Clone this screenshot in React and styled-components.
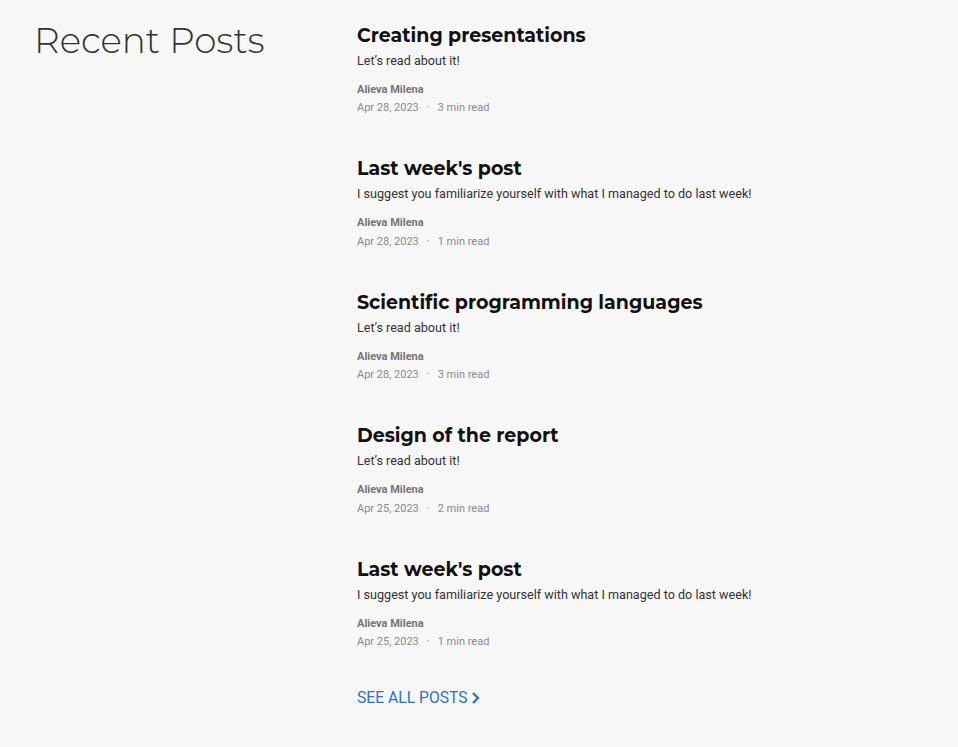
import React from "react";
import styled, { createGlobalStyle } from "styled-components";

const Global = createGlobalStyle`
  html, body { margin: 0; padding: 0; background: #f7f7f7; }
  body { font-family: Roboto, "Liberation Sans", sans-serif; }
`;

const Page = styled.div`
  display: grid;
  grid-template-columns: 322px 1fr;
  padding: 18px 0 0 35px;
  min-height: 747px;
  box-sizing: border-box;
`;

const Heading = styled.h2`
  margin: 0 0 0 -1px;
  font-family: Montserrat, "Open Sans", sans-serif;
  font-weight: 300;
  font-size: 35.7px;
  line-height: 44px;
  color: #333;
`;

const List = styled.div`
  display: flex;
  flex-direction: column;
  gap: 41px;
  padding-top: 5.75px;
`;

const Post = styled.article`
  display: flex;
  flex-direction: column;
`;

const Title = styled.h3`
  margin: 0;
  font-family: Montserrat, "Open Sans", sans-serif;
  font-weight: 700;
  font-size: 19px;
  line-height: 24px;
  color: #111;
`;

const Desc = styled.p`
  margin: 4px 0 0;
  font-size: 12.6px;
  line-height: 18px;
  color: #333;
`;

const Author = styled.div`
  margin-top: 12px;
  font-size: 11px;
  line-height: 16px;
  font-weight: 700;
  color: #757575;
`;

const Meta = styled.div`
  margin-top: 2.5px;
  font-size: 11px;
  line-height: 16px;
  color: #8a8a8a;
  display: flex;
  gap: 8px;
`;

const Footer = styled.div`
  display: flex;
  margin-top: -3px;
`;

const SeeAll = styled.a`
  display: inline-flex;
  align-items: center;
  gap: 3px;
  font-size: 15.7px;
  line-height: 20px;
  color: #2f6fcf;
  text-decoration: none;
  text-transform: uppercase;
`;

const posts = [
  { t: "Creating presentations", d: "Let’s read about it!", date: "Apr 28, 2023", r: "3 min read" },
  { t: "Last week's post", d: "I suggest you familiarize yourself with what I managed to do last week!", date: "Apr 28, 2023", r: "1 min read" },
  { t: "Scientific programming languages", d: "Let’s read about it!", date: "Apr 28, 2023", r: "3 min read" },
  { t: "Design of the report", d: "Let’s read about it!", date: "Apr 25, 2023", r: "2 min read" },
  { t: "Last week's post", d: "I suggest you familiarize yourself with what I managed to do last week!", date: "Apr 25, 2023", r: "1 min read" },
];

export default function App() {
  return (
    <>
      <Global />
      <Page>
        <Heading>Recent Posts</Heading>
        <List>
          {posts.map((p, i) => (
            <Post key={i}>
              <Title>{p.t}</Title>
              <Desc>{p.d}</Desc>
              <Author>Alieva Milena</Author>
              <Meta>
                <span>{p.date}</span>
                <span>·</span>
                <span>{p.r}</span>
              </Meta>
            </Post>
          ))}
          <Footer>
            <SeeAll href="#">
              See all posts
              <svg width="9" height="14" viewBox="0 0 9 14">
                <path d="M2 2 L7 7 L2 12" fill="none" stroke="currentColor" strokeWidth="2.3" />
              </svg>
            </SeeAll>
          </Footer>
        </List>
      </Page>
    </>
  );
}
